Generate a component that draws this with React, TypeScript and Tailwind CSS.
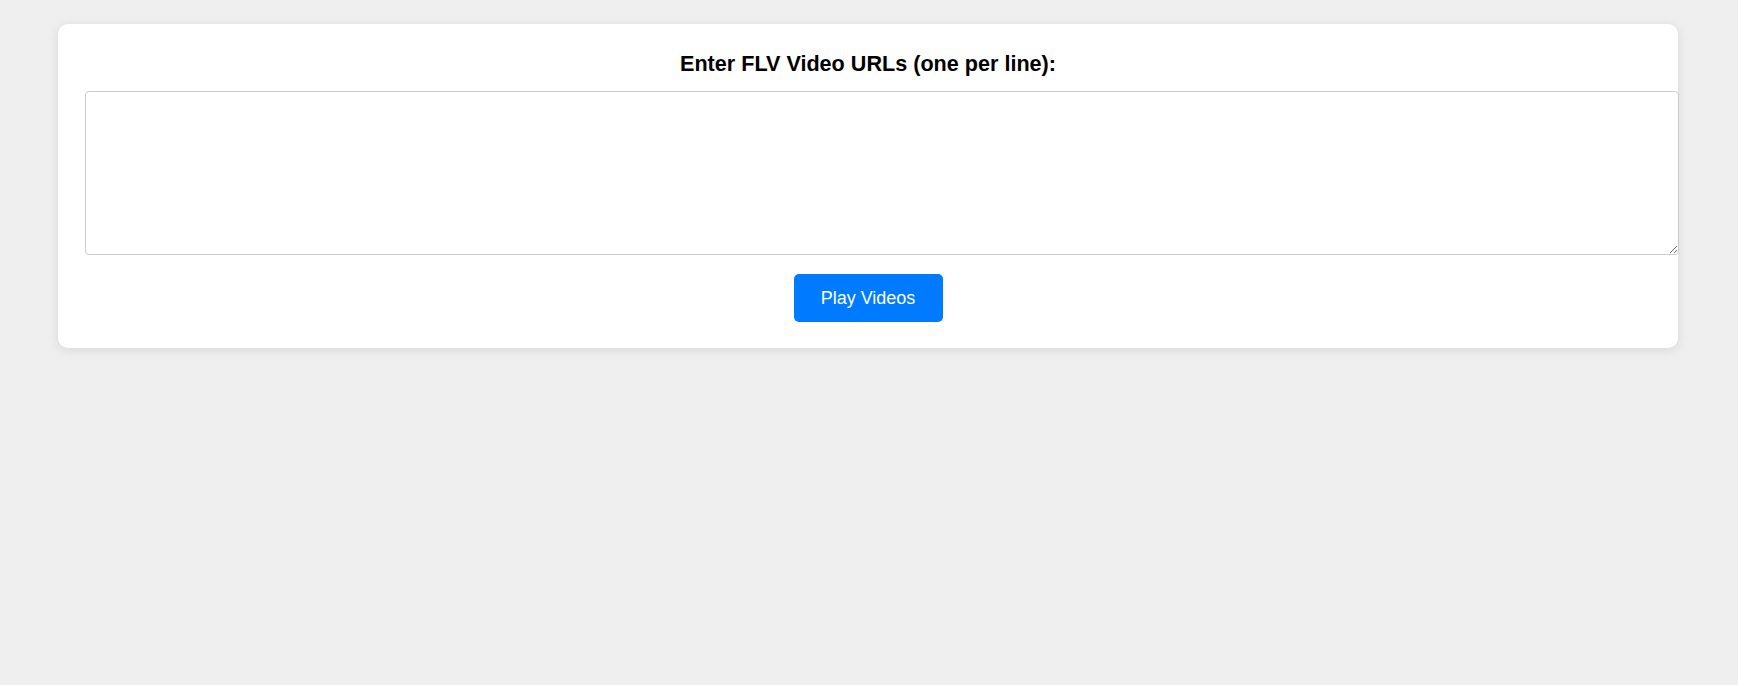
export default function App() {
  return (
    <div className="min-h-screen bg-[#efefef] pt-[24px] pl-[58px] font-['Liberation_Sans',Arial,sans-serif]">
      {/* input card */}
      <div className="w-[1620px] rounded-[10px] bg-white px-[27px] pt-[27px] pb-[26px] shadow-[0_2px_12px_rgba(0,0,0,0.1)]">
        <label className="block text-center text-[21.6px] leading-[25px] font-bold text-black">
          Enter FLV Video URLs (one per line):
        </label>
        <textarea className="mt-[15px] block h-[164px] w-[1594px] rounded-[4px] border border-[#cccccc] bg-white p-[10px] text-[15px] outline-none" />
        <div className="mt-[19px] flex justify-center">
          <button className="h-[48px] w-[149px] rounded-[5px] bg-[#007bff] text-[18px] text-white">
            Play Videos
          </button>
        </div>
      </div>
    </div>
  );
}
